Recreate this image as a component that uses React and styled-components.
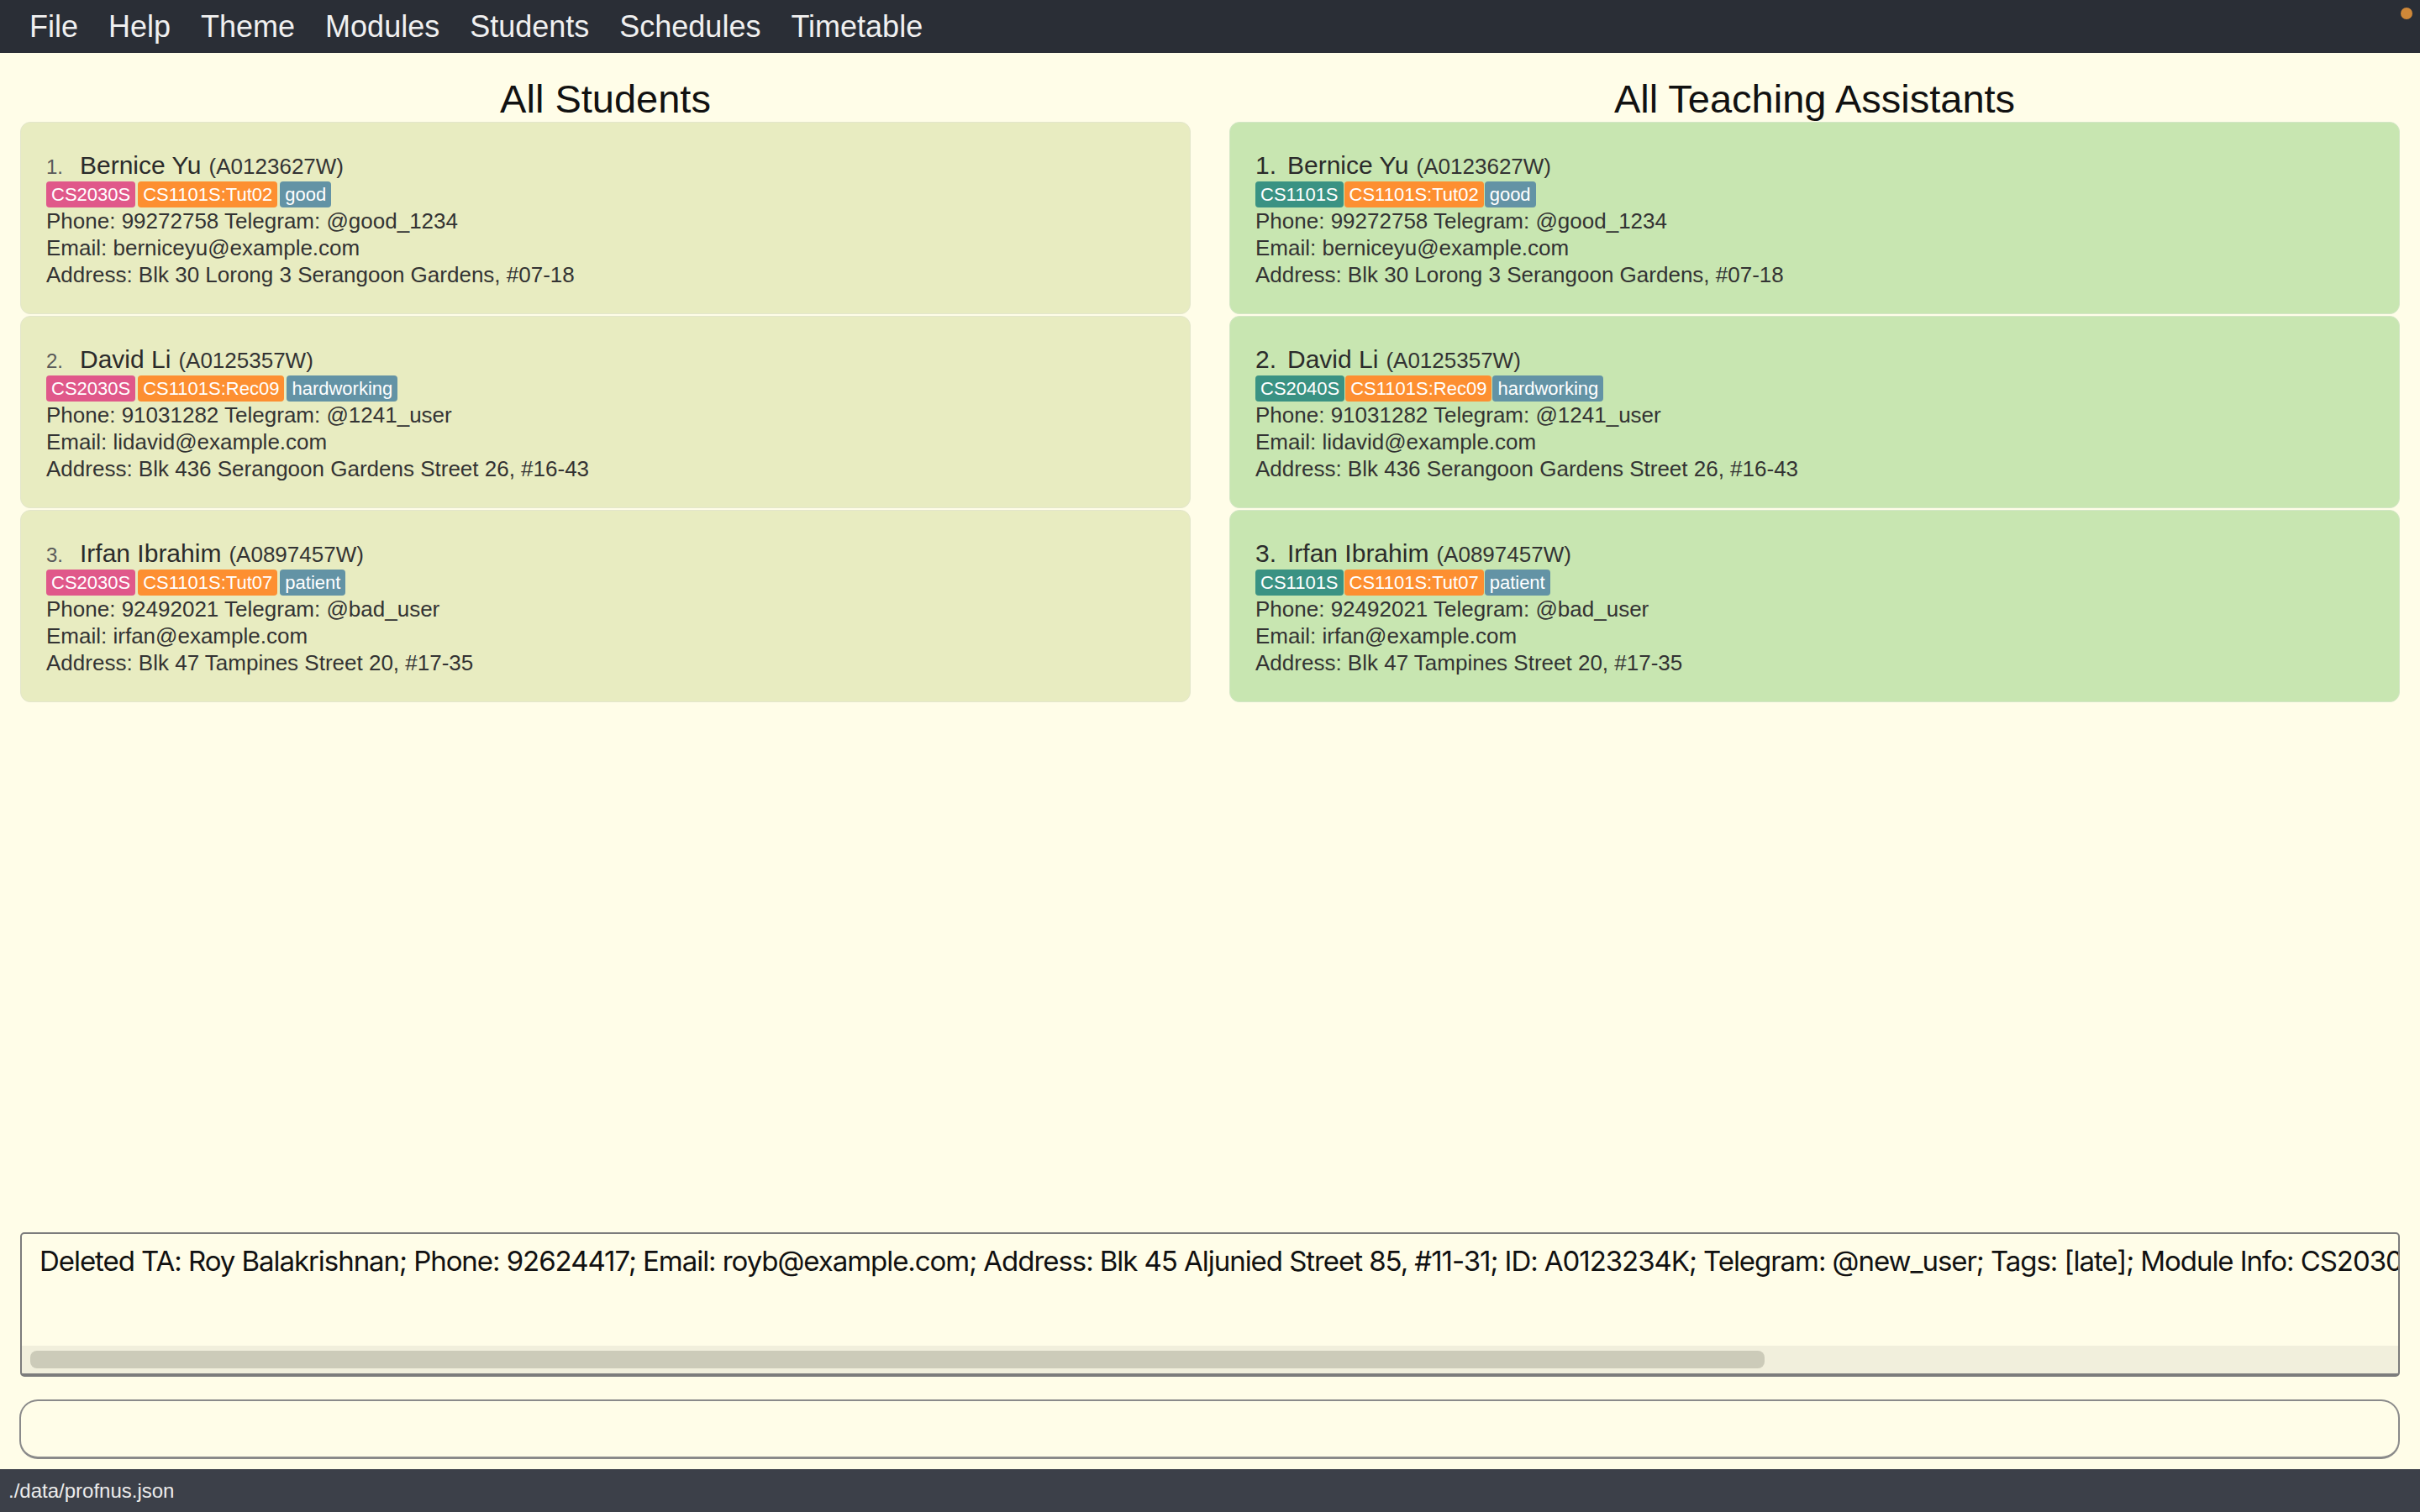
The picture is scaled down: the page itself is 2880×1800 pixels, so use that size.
import React from 'react'
import styled, { createGlobalStyle } from 'styled-components'

const GlobalStyle = createGlobalStyle`
html, body {
  margin: 0;
  padding: 0;
  background: #fffde8;
}
#root {
  height: 1800px;
}
* {
  box-sizing: border-box;
}
`

const Window = styled.div`
height: 1800px;
display: flex;
flex-direction: column;
background: #fffde8;
font-family: "Liberation Sans", Arial, sans-serif;
color: #333;
overflow: hidden;
`
const MenuBar = styled.div`
position: relative;
height: 63px;
flex-shrink: 0;
background: #2a2e36;
display: flex;
align-items: center;
padding-left: 17px;
`
const MenuItem = styled.div`
padding: 0 18px;
font-size: 36px;
color: #f0f0f0;
line-height: 63px;
`
const Dot = styled.div`
position: absolute;
top: 9px;
right: 9px;
width: 14px;
height: 14px;
border-radius: 50%;
background: #d08838;
`
const Lists = styled.div`
flex: 1;
display: flex;
gap: 46px;
padding: 0 24px;
min-height: 0;
`
const Column = styled.div`
flex: 1;
display: flex;
flex-direction: column;
min-width: 0;
`
const Title = styled.div`
font-size: 47px;
line-height: 54px;
color: #111;
text-align: center;
padding-top: 28px;
height: 82px;
`
const Card = styled.div`
background: ${props => props.bg};
border: 1px solid ${props => props.edge};
border-radius: 12px;
padding: 33px 30px 30px;
margin-bottom: 2px;
`
const NameRow = styled.div`
display: flex;
align-items: baseline;
height: 36px;
line-height: 36px;
white-space: nowrap;
`
const Index = styled.span`
font-size: ${props => props.big ? '30px' : '24px'};
color: ${props => props.big ? '#2b2b2b' : '#5a5a5a'};
width: ${props => props.big ? '38px' : '40px'};
`
const Name = styled.span`
font-size: 30px;
color: #2b2b2b;
`
const Id = styled.span`
font-size: 26px;
color: #333;
margin-left: 9px;
`
const Tags = styled.div`
display: flex;
gap: ${props => props.gap}px;
margin-top: 1px;
height: 31px;
`
const Tag = styled.span`
background: ${props => props.color};
color: #fff;
font-size: 22px;
line-height: 31px;
padding: 0 6px;
border-radius: 4px;
white-space: nowrap;
`
const Line = styled.div`
font-size: 26px;
line-height: 32px;
color: #333;
white-space: nowrap;
`
const ResultBox = styled.div`
flex-shrink: 0;
height: 172px;
margin: 0 24px;
border: 2px solid #7c7c7c;
border-bottom-width: 4px;
border-radius: 5px;
display: flex;
flex-direction: column;
overflow: hidden;
background: #fffde8;
`
const ResultText = styled.div`
flex: 1;
padding: 12px 0 0 21px;
font-family: Inter, "Liberation Sans", sans-serif;
font-size: 33px;
line-height: 40px;
letter-spacing: -1.05px;
color: #111;
white-space: nowrap;
overflow: hidden;
`
const ScrollTrack = styled.div`
height: 33px;
background: #f1efdc;
padding: 6px 10px 6px 10px;
`
const ScrollThumb = styled.div`
height: 100%;
border-radius: 8px;
background: #cccbb9;
`
const CommandBox = styled.input`
flex-shrink: 0;
height: 71px;
margin: 27px 24px 12px 23px;
border: 2px solid #8a8a8a;
border-bottom-width: 3px;
border-radius: 22px;
background: #fffde8;
font-size: 30px;
padding: 0 20px;
outline: none;
`
const StatusBar = styled.div`
flex-shrink: 0;
height: 51px;
background: #3c4049;
color: #ececec;
font-size: 24px;
line-height: 51px;
padding-left: 10px;
`

const menus = ['File', 'Help', 'Theme', 'Modules', 'Students', 'Schedules', 'Timetable']

const tagColors = {
  pink: '#e0588a',
  orange: '#fd8f31',
  slate: '#6393a5',
  teal: '#3a9283',
}

const students = [
  { name: 'Bernice Yu', id: 'A0123627W', tags: [['CS2030S', 'pink'], ['CS1101S:Tut02', 'orange'], ['good', 'slate']], phone: '99272758', tele: '@good_1234', email: 'berniceyu@example.com', address: 'Blk 30 Lorong 3 Serangoon Gardens, #07-18' },
  { name: 'David Li', id: 'A0125357W', tags: [['CS2030S', 'pink'], ['CS1101S:Rec09', 'orange'], ['hardworking', 'slate']], phone: '91031282', tele: '@1241_user', email: 'lidavid@example.com', address: 'Blk 436 Serangoon Gardens Street 26, #16-43' },
  { name: 'Irfan Ibrahim', id: 'A0897457W', tags: [['CS2030S', 'pink'], ['CS1101S:Tut07', 'orange'], ['patient', 'slate']], phone: '92492021', tele: '@bad_user', email: 'irfan@example.com', address: 'Blk 47 Tampines Street 20, #17-35' },
]

const tas = [
  { name: 'Bernice Yu', id: 'A0123627W', tags: [['CS1101S', 'teal'], ['CS1101S:Tut02', 'orange'], ['good', 'slate']], phone: '99272758', tele: '@good_1234', email: 'berniceyu@example.com', address: 'Blk 30 Lorong 3 Serangoon Gardens, #07-18' },
  { name: 'David Li', id: 'A0125357W', tags: [['CS2040S', 'teal'], ['CS1101S:Rec09', 'orange'], ['hardworking', 'slate']], phone: '91031282', tele: '@1241_user', email: 'lidavid@example.com', address: 'Blk 436 Serangoon Gardens Street 26, #16-43' },
  { name: 'Irfan Ibrahim', id: 'A0897457W', tags: [['CS1101S', 'teal'], ['CS1101S:Tut07', 'orange'], ['patient', 'slate']], phone: '92492021', tele: '@bad_user', email: 'irfan@example.com', address: 'Blk 47 Tampines Street 20, #17-35' },
]

const PersonCard = ({ person, index, ta }) => (
  <Card bg={ta ? '#c8e6b1' : '#e8ecc1'} edge={ta ? '#d3e6c6' : '#e3e6cc'}>
    <NameRow>
      <Index big={ta}>{index}.</Index>
      <Name>{person.name}</Name>
      <Id>({person.id})</Id>
    </NameRow>
    <Tags gap={ta ? 1 : 3}>
      {person.tags.map(([label, c]) => <Tag key={label} color={tagColors[c]}>{label}</Tag>)}
    </Tags>
    <Line>Phone: {person.phone} Telegram: {person.tele}</Line>
    <Line>Email: {person.email}</Line>
    <Line>Address: {person.address}</Line>
  </Card>
)

const App = () => {
  return (
    <Window>
      <GlobalStyle />
      <MenuBar>
        {menus.map(m => <MenuItem key={m}>{m}</MenuItem>)}
        <Dot />
      </MenuBar>
      <Lists>
        <Column>
          <Title>All Students</Title>
          {students.map((p, i) => <PersonCard key={p.id} person={p} index={i + 1} />)}
        </Column>
        <Column>
          <Title>All Teaching Assistants</Title>
          {tas.map((p, i) => <PersonCard key={p.id} person={p} index={i + 1} ta />)}
        </Column>
      </Lists>
      <ResultBox>
        <ResultText>
          Deleted TA: Roy Balakrishnan; Phone: 92624417; Email: royb@example.com; Address: Blk 45 Aljunied Street 85, #11-31; ID: A0123234K; Telegram: @new_user; Tags: [late]; Module Info: CS2030S: Tut03
        </ResultText>
        <ScrollTrack>
          <ScrollThumb style={{ width: '73.5%' }} />
        </ScrollTrack>
      </ResultBox>
      <CommandBox />
      <StatusBar>./data/profnus.json</StatusBar>
    </Window>
  )
}

export default App
